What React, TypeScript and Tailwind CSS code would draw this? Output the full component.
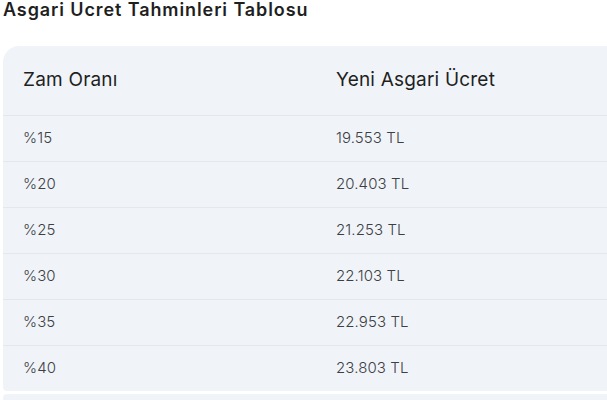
const rows = [
  { rate: "%15", wage: "19.553 TL" },
  { rate: "%20", wage: "20.403 TL" },
  { rate: "%25", wage: "21.253 TL" },
  { rate: "%30", wage: "22.103 TL" },
  { rate: "%35", wage: "22.953 TL" },
  { rate: "%40", wage: "23.803 TL" },
];

export default function App() {
  return (
    <div className="w-[607px] h-[400px] overflow-hidden bg-white pl-[3px] font-['Inter',sans-serif]">
      <h3 className="text-[18px] leading-5 font-semibold tracking-[0.9px] text-[#1f1f1f]">
        Asgari Ucret Tahminleri Tablosu
      </h3>

      <div className="mt-[26px] w-[660px] rounded-tl-2xl rounded-bl-[4px] bg-[#f0f4f9]">
        <div className="grid grid-cols-[313px_1fr] h-[70px] items-center px-5 border-b border-[#e3e8ee] text-[19px] tracking-[0.2px] text-[#1f1f1f]">
          <div>Zam Oranı</div>
          <div>Yeni Asgari Ücret</div>
        </div>
        {rows.map((r, i) => (
          <div
            key={r.rate}
            className={`grid grid-cols-[313px_1fr] items-center px-5 text-[15px] tracking-[0.1px] font-light text-[#3c4043] ${
              i < rows.length - 1 ? "h-[46px] border-b border-[#e3e8ee]" : "h-[45px]"
            }`}
          >
            <div>{r.rate}</div>
            <div>{r.wage}</div>
          </div>
        ))}
      </div>

      <div className="mt-[3px] w-[660px] h-[20px] rounded-tl-[4px] bg-[#f0f4f9]" />
    </div>
  );
}
